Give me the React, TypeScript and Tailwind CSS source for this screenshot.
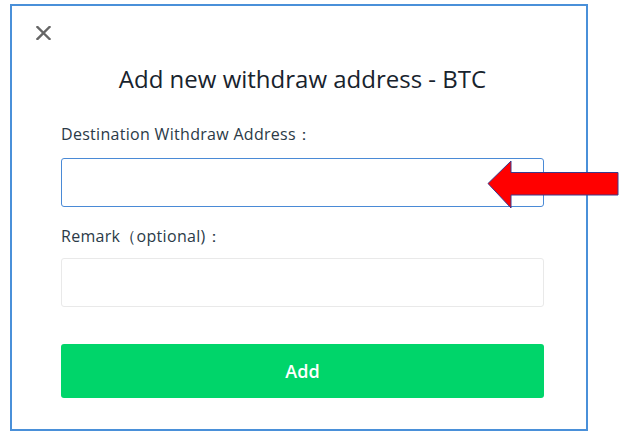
import React from "react"

function CloseIcon() {
  return (
    <svg className="block" width="15" height="14" viewBox="0 0 15 14" fill="none">
      <path d="M1.5 1L13.5 13M13.5 1L1.5 13" stroke="#666" strokeWidth="2.4" strokeLinecap="square" />
    </svg>
  )
}

function RedArrow() {
  return (
    <svg
      className="absolute left-[487px] top-[160px]"
      width="133"
      height="50"
      viewBox="0 0 133 50"
    >
      <polygon
        points="1,23.5 24,1 24,12.5 131,12.5 131,35 24,35 24,48"
        fill="#ff0000"
        stroke="#3a3a8c"
        strokeWidth="1"
      />
    </svg>
  )
}

export default function App() {
  return (
    <div className="relative w-[632px] h-[434px] bg-white overflow-hidden font-['Open_Sans',sans-serif]">
      <div className="ml-[10px] mt-[4px] w-[578px] h-[427px] border-2 border-[#4a90d9] bg-white">
        <div className="pt-[20px] pl-[24px]">
          <button className="block">
            <CloseIcon />
          </button>
        </div>

        <div className="pl-[49px] pr-[42px]">
          <h2 className="mt-[24px] text-center text-[24px] leading-[30px] text-[#18232d]">
            Add new withdraw address - BTC
          </h2>

          <label className="block mt-[29px] text-[16px] leading-[22px] tracking-[0.3px] text-[#2b3a47]">
            Destination Withdraw Address：
          </label>
          <input
            className="block mt-[13px] w-full h-[49px] rounded-[3px] border border-[#4a8ad6] outline-none px-3"
            type="text"
          />

          <label className="block mt-[18px] text-[16px] leading-[22px] tracking-[0.3px] text-[#2b3a47]">
            Remark（optional)：
          </label>
          <input
            className="block mt-[11px] w-full h-[49px] rounded-[3px] border border-[#e9e9e9] outline-none px-3"
            type="text"
          />

          <button className="mt-[37px] w-full h-[54px] rounded-[3px] bg-[#00d56a] text-white text-[18px] font-semibold">
            Add
          </button>
        </div>
      </div>

      <RedArrow />
    </div>
  )
}
